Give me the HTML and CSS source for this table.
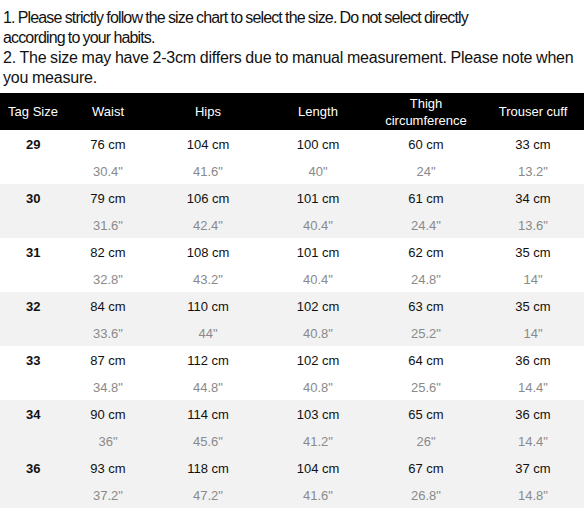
FILE: index.html
```html
<!DOCTYPE html>
<html>
<head>
<meta charset="utf-8">
<link rel="stylesheet" href="styles.css">
</head>
<body>
<div class="notes">
<p class="n1">1. Please strictly follow the size chart to select the size. Do not select directly<br>according to your habits.</p>
<p class="n2">2. The size may have 2-3cm differs due to manual measurement. Please note when<br>you measure.</p>
</div>
<table class="chart">
<colgroup>
<col class="c1"><col class="c2"><col class="c3"><col class="c4"><col class="c5"><col class="c6">
</colgroup>
<thead>
<tr><th>Tag Size</th><th>Waist</th><th>Hips</th><th>Length</th><th class="two">Thigh<br>circumference</th><th>Trouser cuff</th></tr>
</thead>
<tbody class="white">
<tr class="cm"><td class="tag">29</td><td>76 cm</td><td>104 cm</td><td>100 cm</td><td>60 cm</td><td>33 cm</td></tr>
<tr class="in"><td></td><td>30.4"</td><td>41.6"</td><td>40"</td><td>24"</td><td>13.2"</td></tr>
</tbody>
<tbody class="grey">
<tr class="cm"><td class="tag">30</td><td>79 cm</td><td>106 cm</td><td>101 cm</td><td>61 cm</td><td>34 cm</td></tr>
<tr class="in"><td></td><td>31.6"</td><td>42.4"</td><td>40.4"</td><td>24.4"</td><td>13.6"</td></tr>
</tbody>
<tbody class="white">
<tr class="cm"><td class="tag">31</td><td>82 cm</td><td>108 cm</td><td>101 cm</td><td>62 cm</td><td>35 cm</td></tr>
<tr class="in"><td></td><td>32.8"</td><td>43.2"</td><td>40.4"</td><td>24.8"</td><td>14"</td></tr>
</tbody>
<tbody class="grey">
<tr class="cm"><td class="tag">32</td><td>84 cm</td><td>110 cm</td><td>102 cm</td><td>63 cm</td><td>35 cm</td></tr>
<tr class="in"><td></td><td>33.6"</td><td>44"</td><td>40.8"</td><td>25.2"</td><td>14"</td></tr>
</tbody>
<tbody class="white">
<tr class="cm"><td class="tag">33</td><td>87 cm</td><td>112 cm</td><td>102 cm</td><td>64 cm</td><td>36 cm</td></tr>
<tr class="in"><td></td><td>34.8"</td><td>44.8"</td><td>40.8"</td><td>25.6"</td><td>14.4"</td></tr>
</tbody>
<tbody class="grey">
<tr class="cm"><td class="tag">34</td><td>90 cm</td><td>114 cm</td><td>103 cm</td><td>65 cm</td><td>36 cm</td></tr>
<tr class="in"><td></td><td>36"</td><td>45.6"</td><td>41.2"</td><td>26"</td><td>14.4"</td></tr>
</tbody>
<tbody class="grey">
<tr class="cm"><td class="tag">36</td><td>93 cm</td><td>118 cm</td><td>104 cm</td><td>67 cm</td><td>37 cm</td></tr>
<tr class="in"><td></td><td>37.2"</td><td>47.2"</td><td>41.6"</td><td>26.8"</td><td>14.8"</td></tr>
</tbody>
</table>
</body>
</html>
```
FILE: styles.css
```css
html, body {
  margin: 0;
  padding: 0;
  background: #fff;
}
body {
  font-family: "Liberation Sans", Arial, sans-serif;
  color: #000;
  width: 584px;
}
.notes {
  padding: 8px 0 0 3px;
  height: 93px;
  box-sizing: border-box;
}
.notes p {
  margin: 0;
  font-size: 16px;
  line-height: 20px;
  white-space: nowrap;
  color: #111;
}
.notes .n1 {
  letter-spacing: -0.85px;
  word-spacing: -0.5px;
}
.notes .n2 {
  letter-spacing: -0.2px;
  word-spacing: -0.5px;
}
.chart {
  border-collapse: collapse;
  border-spacing: 0;
  table-layout: fixed;
  width: 584px;
  font-size: 13px;
}
.c1 { width: 66px; }
.c2 { width: 84px; }
.c3 { width: 116px; }
.c4 { width: 104px; }
.c5 { width: 112px; }
.c6 { width: 102px; }
.chart th {
  background: #000;
  color: #fff;
  font-weight: normal;
  height: 37px;
  padding: 0;
  text-align: center;
  vertical-align: middle;
  line-height: 17px;
}
.chart td {
  padding: 2px 0 0;
  text-align: center;
  height: 25px;
  line-height: 15px;
  vertical-align: middle;
}
.chart tr.cm td {
  color: #111;
}
.chart tr.in td {
  color: #8a8a8a;
}
.chart td.tag {
  font-weight: bold;
  text-align: left;
  padding-left: 26px;
}
.grey td {
  background: #f2f2f2;
}
.white td {
  background: #fff;
}
```
